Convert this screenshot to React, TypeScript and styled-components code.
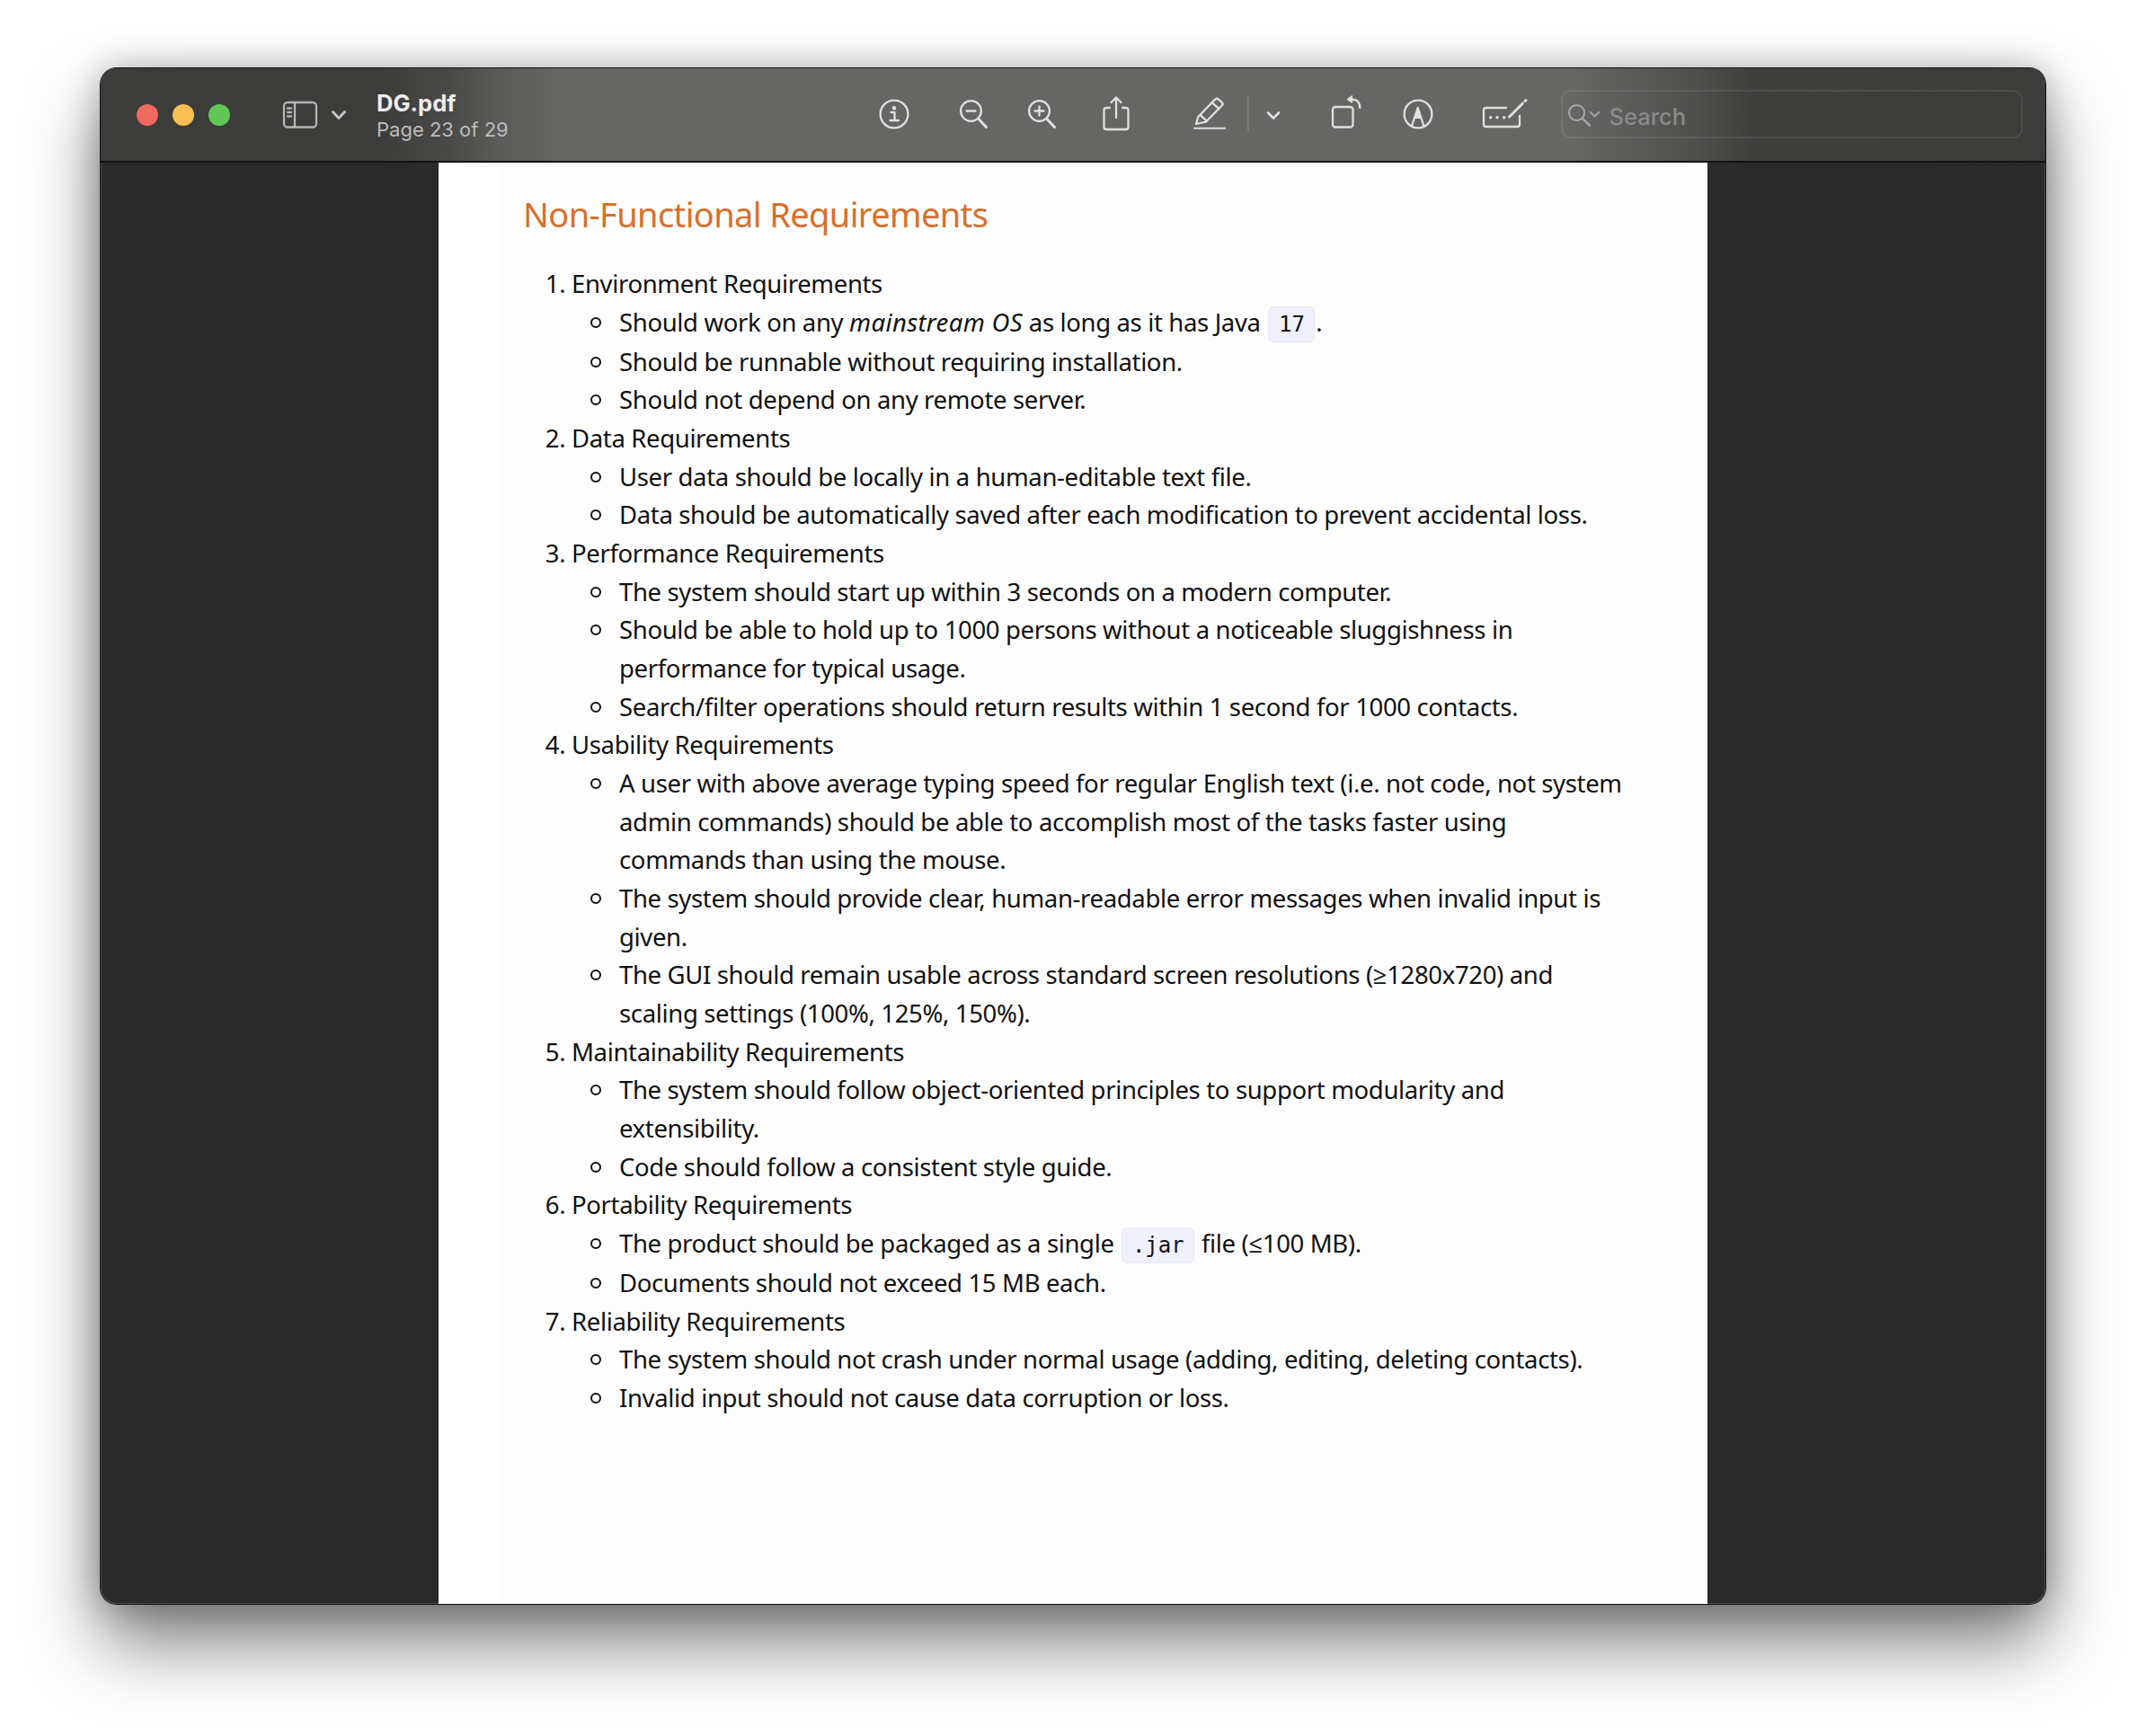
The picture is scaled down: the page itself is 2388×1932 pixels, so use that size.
import React from 'react';
import styled, { createGlobalStyle } from 'styled-components';

const GlobalStyle = createGlobalStyle`
  html, body { margin: 0; padding: 0; background: #ffffff; }
  body { font-family: "Noto Sans", "Open Sans", sans-serif; }
`;

const Stage = styled.div`
  width: 2388px;
  height: 1932px;
  padding: 76px 112px 0;
  box-sizing: border-box;
  overflow: hidden;
`;

const WindowFrame = styled.div`
  border-radius: 18px;
  box-shadow: 0 0 0 1px #111, 0 44px 80px rgba(0, 0, 0, 0.5), 0 0 40px rgba(0, 0, 0, 0.28);
`;

const Window = styled.div`
  width: 2164px;
  height: 1709px;
  display: flex;
  flex-direction: column;
  border-radius: 18px;
  overflow: hidden;
  background: #2a2a2a;
`;

const Toolbar = styled.div`
  height: 105px;
  flex: none;
  display: flex;
  align-items: center;
  box-sizing: border-box;
  padding: 0 0 1px 40px;
  border-bottom: 2px solid #111;
  background: linear-gradient(
    90deg,
    #3c3c3b 0,
    #3c3c3b 310px,
    #4a4a49 390px,
    #5a5a59 440px,
    #666665 510px,
    #666665 1640px,
    #5a5a59 1708px,
    #4f4f4e 1775px,
    #3f3f3e 1840px,
    #3c3c3b 100%
  );
`;

const Light = styled.span<{ $color: string }>`
  width: 24px;
  height: 24px;
  border-radius: 50%;
  background: ${(p) => p.$color};
  margin: 1px 16px 0 0;
  flex: none;
`;

const Tool = styled.div<{ $gap: number; $color?: string }>`
  margin-left: ${(p) => p.$gap}px;
  flex: none;
  display: flex;
  color: ${(p) => p.$color ?? '#e0e0df'};
`;

const Titles = styled.div`
  width: 556px;
  flex: none;
  display: flex;
  flex-direction: column;
  margin-left: 32px;
  padding-top: 4px;
`;

const FileName = styled.div`
  font-family: "Inter", sans-serif;
  font-size: 25.5px;
  line-height: 30px;
  font-weight: 700;
  color: #eeeeed;
`;

const PageInfo = styled.div`
  font-family: "Inter", sans-serif;
  font-size: 22px;
  line-height: 28px;
  color: #bcbcbb;
`;

const Divider = styled.span`
  width: 1.5px;
  height: 40px;
  margin-left: 22px;
  flex: none;
  background: #777776;
`;

const SearchBox = styled.div`
  width: 514px;
  height: 54px;
  margin-left: 37px;
  flex: none;
  box-sizing: border-box;
  display: flex;
  align-items: center;
  gap: 9px;
  padding-left: 5px;
  border: 2px solid rgba(255, 255, 255, 0.08);
  border-radius: 11px;
  color: #a6a6a5;
`;

const SearchLabel = styled.span`
  margin-top: 4px;
  font-family: "Inter", sans-serif;
  font-size: 25.5px;
  font-weight: 500;
  color: #8a8a89;
`;

const Content = styled.div`
  flex: 1;
  min-height: 0;
  display: flex;
  justify-content: center;
  box-sizing: border-box;
  background: #2a2a2a;
  border: solid #4c4c4c;
  border-width: 0 1.5px 1.5px;
  border-radius: 0 0 18px 18px;
`;

const Page = styled.div`
  width: 1412px;
  margin-bottom: -2px;
  box-sizing: border-box;
  background: linear-gradient(90deg, #ffffff 66px, #fdfdfd 66px);
  padding: 29px 0 0 94px;
  color: #111;
  font-size: 27.5px;
  letter-spacing: -0.35px;
  line-height: 42.65px;
`;

const Heading = styled.h1`
  margin: 0 0 29px;
  font-size: 38px;
  letter-spacing: -0.62px;
  line-height: 56px;
  font-weight: 400;
  color: #d96f2c;
`;

const Section = styled.div`
  display: flex;
  white-space: nowrap;
`;

const Marker = styled.span`
  width: 54px;
  flex: none;
  text-align: right;
  box-sizing: border-box;
`;

const SectionBody = styled.div`
  flex: 1;
`;

const Bullets = styled.ul`
  list-style: none;
  margin: 0;
  padding: 0;
`;

const Bullet = styled.li<{ $tall?: boolean }>`
  position: relative;
  padding-left: 53px;
  padding-bottom: ${(p) => (p.$tall ? '1.5px' : '0')};

  &::before {
    content: '';
    position: absolute;
    left: 21px;
    top: 15px;
    width: 8px;
    height: 8px;
    border: 2px solid #111;
    border-radius: 50%;
  }
`;

const Emphasis = styled.em`
  letter-spacing: 0.35px;
`;

const Code = styled.code`
  font-family: "DejaVu Sans Mono", monospace;
  font-size: 24px;
  letter-spacing: 0;
  line-height: 1;
  background: #eff0fc;
  box-shadow: inset 0 0 0 1px #e9eaf6;
  border-radius: 6px;
  padding: 6px 11.5px;
  margin: 0 1px 0 2px;
`;

const strokeProps = {
  fill: 'none',
  stroke: 'currentColor',
  strokeWidth: 2.3,
  strokeLinecap: 'round' as const,
  strokeLinejoin: 'round' as const,
};

const SidebarIcon = () => (
  <svg width="40" height="44" viewBox="0 0 40 44" {...strokeProps}>
    <rect x="2" y="9" width="36" height="27.5" rx="4" />
    <path d="M14 9v27.5M6 15.5h4M6 20h4M6 24.5h4" />
  </svg>
);

const TitleChevron = () => (
  <svg width="20" height="44" viewBox="0 0 20 44" {...strokeProps} strokeWidth="3">
    <path d="M3.5 19.5l6.5 7 6.5-7" />
  </svg>
);

const SmallChevron = () => (
  <svg width="20" height="44" viewBox="0 0 20 44" {...strokeProps} strokeWidth="2.6">
    <path d="M4 20.5l6 6 6-6" />
  </svg>
);

const InfoIcon = () => (
  <svg width="40" height="44" viewBox="0 0 40 44" {...strokeProps}>
    <circle cx="20" cy="22" r="15.4" />
    <path d="M16.5 20h4v9M15.5 29h9.5" />
    <circle cx="20" cy="15.2" r="1.1" fill="currentColor" />
  </svg>
);

const ZoomIcon = ({ plus }: { plus?: boolean }) => (
  <svg width="40" height="44" viewBox="0 0 40 44" {...strokeProps}>
    <circle cx="16.5" cy="18.5" r="11.4" />
    <path d="M25 27.5l8.5 9" strokeWidth="3" />
    <path d={plus ? 'M11.5 18.5h10M16.5 13.5v10' : 'M11.5 18.5h10'} />
  </svg>
);

const ShareIcon = () => (
  <svg width="40" height="44" viewBox="0 0 40 44" {...strokeProps}>
    <path d="M13 15H9a2.500 2.500 0 0 0-2.500 2.500v19a2.500 2.500 0 0 0 2.500 2.500h22a2.500 2.500 0 0 0 2.500-2.500v-19A2.500 2.500 0 0 0 31 15h-4" />
    <path d="M20 26V4M14.500 9L20 3.500 25.500 9" />
  </svg>
);

const PenIcon = () => (
  <svg width="40" height="44" viewBox="0 0 40 44" {...strokeProps}>
    <path d="M7.300 25L25.700 6c1.200-1.300 2.500-1.700 3.800-.8l4.400 4c1.100 1.100.8 2.300-.2 3.300L15.700 30.700 5 33z" />
    <path d="M22.300 8.800l8.200 7.400M10 23.300l7 6.500" />
    <path d="M3 37.700h34" strokeWidth="2" />
  </svg>
);

const RotateIcon = () => (
  <svg width="40" height="44" viewBox="0 0 40 44" {...strokeProps}>
    <rect x="7" y="14" width="22.500" height="22.500" rx="3" />
    <path d="M37.300 15c0-6-3-9.300-9-9.300" />
    <path d="M28.300 1.700L23 5.500l5.300 3.800z" fill="currentColor" strokeWidth="1" />
  </svg>
);

const MarkupIcon = () => (
  <svg width="40" height="44" viewBox="0 0 40 44" {...strokeProps}>
    <circle cx="20" cy="22" r="15.400" />
    <path d="M13 35l6.700-20 6.600 20" />
    <path d="M19.700 15l-4.400 12h8.800z" fill="currentColor" stroke="none" />
  </svg>
);

const SignIcon = () => (
  <svg width="54" height="44" viewBox="0 0 54 44" {...strokeProps}>
    <path d="M30 15H7.500A2.500 2.500 0 0 0 5 17.500v16A2.500 2.500 0 0 0 7.500 36h35a2.500 2.500 0 0 0 2.500-2.500V24" />
    <path d="M33.500 25l14.800-14.800" strokeWidth="3" />
    <path d="M51 7.500l1-1" strokeWidth="3" />
    <circle cx="12.700" cy="25.700" r="1.700" fill="currentColor" stroke="none" />
    <circle cx="20" cy="25.700" r="1.700" fill="currentColor" stroke="none" />
    <circle cx="27.700" cy="25.700" r="1.700" fill="currentColor" stroke="none" />
  </svg>
);

const SearchIcon = () => (
  <svg width="38" height="28" viewBox="0 0 38 28" {...strokeProps} strokeWidth="2">
    <circle cx="10.500" cy="12.500" r="8.600" />
    <path d="M17 19l8 7.500" strokeWidth="2.400" />
    <path d="M26 12l4.500 4.500L35 12" />
  </svg>
);

const sections: { title: string; items: React.ReactNode[]; tall?: number[] }[] = [
  {
    title: 'Environment Requirements',
    tall: [0],
    items: [
      <>Should work on any <Emphasis>mainstream OS</Emphasis> as long as it has Java <Code>17</Code>.</>,
      'Should be runnable without requiring installation.',
      'Should not depend on any remote server.',
    ],
  },
  {
    title: 'Data Requirements',
    items: [
      'User data should be locally in a human-editable text file.',
      'Data should be automatically saved after each modification to prevent accidental loss.',
    ],
  },
  {
    title: 'Performance Requirements',
    items: [
      'The system should start up within 3 seconds on a modern computer.',
      <>Should be able to hold up to 1000 persons without a noticeable sluggishness in<br />performance for typical usage.</>,
      'Search/filter operations should return results within 1 second for 1000 contacts.',
    ],
  },
  {
    title: 'Usability Requirements',
    items: [
      <>A user with above average typing speed for regular English text (i.e. not code, not system<br />admin commands) should be able to accomplish most of the tasks faster using<br />commands than using the mouse.</>,
      <>The system should provide clear, human-readable error messages when invalid input is<br />given.</>,
      <>The GUI should remain usable across standard screen resolutions (≥1280x720) and<br />scaling settings (100%, 125%, 150%).</>,
    ],
  },
  {
    title: 'Maintainability Requirements',
    items: [
      <>The system should follow object-oriented principles to support modularity and<br />extensibility.</>,
      'Code should follow a consistent style guide.',
    ],
  },
  {
    title: 'Portability Requirements',
    tall: [0],
    items: [
      <>The product should be packaged as a single <Code>.jar</Code> file (≤100 MB).</>,
      'Documents should not exceed 15 MB each.',
    ],
  },
  {
    title: 'Reliability Requirements',
    items: [
      'The system should not crash under normal usage (adding, editing, deleting contacts).',
      'Invalid input should not cause data corruption or loss.',
    ],
  },
];

const App: React.FC = () => (
  <Stage>
    <GlobalStyle />
    <WindowFrame>
      <Window>
        <Toolbar>
          <Light $color="#f0695e" />
          <Light $color="#f6bf4f" />
          <Light $color="#60c655" />
          <Tool $gap={42} $color="#b4b4b3"><SidebarIcon /></Tool>
          <Tool $gap={13} $color="#c4c4c3"><TitleChevron /></Tool>
          <Titles>
            <FileName>DG.pdf</FileName>
            <PageInfo>Page 23 of 29</PageInfo>
          </Titles>
          <Tool $gap={0}><InfoIcon /></Tool>
          <Tool $gap={49}><ZoomIcon /></Tool>
          <Tool $gap={36}><ZoomIcon plus /></Tool>
          <Tool $gap={42}><ShareIcon /></Tool>
          <Tool $gap={64}><PenIcon /></Tool>
          <Divider />
          <Tool $gap={17}><SmallChevron /></Tool>
          <Tool $gap={49}><RotateIcon /></Tool>
          <Tool $gap={42}><MarkupIcon /></Tool>
          <Tool $gap={48}><SignIcon /></Tool>
          <SearchBox>
            <SearchIcon />
            <SearchLabel>Search</SearchLabel>
          </SearchBox>
        </Toolbar>
        <Content>
          <Page>
            <Heading>Non-Functional Requirements</Heading>
            {sections.map((section, i) => (
              <Section key={section.title}>
                <Marker>{i + 1}.&nbsp;</Marker>
                <SectionBody>
                  {section.title}
                  <Bullets>
                    {section.items.map((item, j) => (
                      <Bullet key={j} $tall={section.tall?.includes(j)}>{item}</Bullet>
                    ))}
                  </Bullets>
                </SectionBody>
              </Section>
            ))}
          </Page>
        </Content>
      </Window>
    </WindowFrame>
  </Stage>
);

export default App;
